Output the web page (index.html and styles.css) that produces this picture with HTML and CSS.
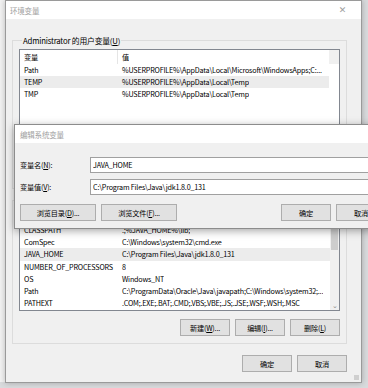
FILE: index.html
```html
<!DOCTYPE html>
<html lang="zh-CN">
<head>
  <meta charset="UTF-8" />
  <meta name="viewport" content="width=device-width, initial-scale=1.0"/>
  <title>环境变量</title>
  <link rel="stylesheet" href="styles.css">
</head>
<body>
  <div class="desk">
    <div class="side-strip"></div>

    <!-- background window: 环境变量 -->
    <div class="win env-win">
      <div class="titlebar">
        <span class="title">环境变量</span>
        <span class="close">✕</span>
      </div>
      <div class="win-body">
        <fieldset class="group">
          <legend>Administrator 的用户变量(<u>U</u>)</legend>
          <div class="list user-list">
            <div class="row head"><span class="c1">变量</span><span class="c2">值</span></div>
            <div class="row"><span class="c1">Path</span><span class="c2">%USERPROFILE%\AppData\Local\Microsoft\WindowsApps;C:...</span></div>
            <div class="row sel"><span class="c1">TEMP</span><span class="c2">%USERPROFILE%\AppData\Local\Temp</span></div>
            <div class="row"><span class="c1">TMP</span><span class="c2">%USERPROFILE%\AppData\Local\Temp</span></div>
          </div>
          <div class="btn-row">
            <button class="btn">新建(<u>N</u>)...</button>
            <button class="btn">编辑(<u>E</u>)...</button>
            <button class="btn">删除(<u>D</u>)</button>
          </div>
        </fieldset>

        <fieldset class="group sys-group">
          <legend>系统变量(<u>S</u>)</legend>
          <div class="list sys-list">
            <div class="rows">
              <div class="row head"><span class="c1">变量</span><span class="c2">值</span></div>
              <div class="row"><span class="c1">CLASSPATH</span><span class="c2">.;%JAVA_HOME%\lib;</span></div>
              <div class="row"><span class="c1">ComSpec</span><span class="c2">C:\Windows\system32\cmd.exe</span></div>
              <div class="row sel"><span class="c1">JAVA_HOME</span><span class="c2">C:\Program Files\Java\jdk1.8.0_131</span></div>
              <div class="row"><span class="c1">NUMBER_OF_PROCESSORS</span><span class="c2">8</span></div>
              <div class="row"><span class="c1">OS</span><span class="c2">Windows_NT</span></div>
              <div class="row"><span class="c1">Path</span><span class="c2">C:\ProgramData\Oracle\Java\javapath;C:\Windows\system32;...</span></div>
              <div class="row"><span class="c1">PATHEXT</span><span class="c2">.COM;.EXE;.BAT;.CMD;.VBS;.VBE;.JS;.JSE;.WSF;.WSH;.MSC</span></div>
            </div>
            <div class="vscroll">
              <div class="thumb"></div>
              <span class="arrow">⌄</span>
            </div>
          </div>
          <div class="btn-row">
            <button class="btn">新建(<u>W</u>)...</button>
            <button class="btn">编辑(<u>I</u>)...</button>
            <button class="btn">删除(<u>L</u>)</button>
          </div>
        </fieldset>

        <div class="btn-row main-btns">
          <button class="btn">确定</button>
          <button class="btn">取消</button>
        </div>
      </div>
      <span class="grip"></span>
    </div>

    <!-- foreground dialog: 编辑系统变量 -->
    <div class="win edit-win">
      <div class="titlebar">
        <span class="title">编辑系统变量</span>
      </div>
      <div class="edit-body">
        <div class="field">
          <label for="varName">变量名(<u>N</u>):</label>
          <input type="text" id="varName" value="JAVA_HOME" />
        </div>
        <div class="field">
          <label for="varValue">变量值(<u>V</u>):</label>
          <input type="text" id="varValue" value="C:\Program Files\Java\jdk1.8.0_131" />
        </div>
        <div class="edit-btns">
          <button class="btn wide">浏览目录(<u>D</u>)...</button>
          <button class="btn wide">浏览文件(<u>F</u>)...</button>
          <span class="spacer"></span>
          <button class="btn">确定</button>
          <button class="btn">取消</button>
        </div>
      </div>
    </div>
  </div>
</body>
</html>
```

FILE: styles.css
```css
body {
  margin: 0;
  padding: 0;
  font-family: 'Noto Sans CJK SC', sans-serif;
  font-size: 7.2px;
  letter-spacing: -0.2px;
  color: #000;
  background: #d9dbdd;
  overflow: hidden;
}

u {
  text-decoration: underline;
}

.desk {
  position: relative;
  width: 368px;
  height: 388px;
  overflow: hidden;
}

.side-strip {
  width: 6px;
  height: 382px;
  background: #f3f3f3;
  border-right: 1px solid #d0d0d0;
}

.win {
  position: absolute;
  background: #f0f0f0;
  border: 1px solid #9a9a9a;
  box-sizing: border-box;
}

.titlebar {
  height: 18px;
  background: #fff;
  display: flex;
  align-items: center;
  justify-content: space-between;
  padding: 0 15px 0 4px;
}

.title {
  color: #a0a0a0;
  font-size: 7.5px;
}

.close {
  color: #a0a0a0;
  font-size: 9px;
  font-family: 'DejaVu Sans', sans-serif;
}

/* 环境变量 */
.env-win {
  left: 5px;
  top: 0;
  width: 357px;
  height: 383px;
  box-shadow: 0 0 6px rgba(0, 0, 0, 0.25);
}

.win-body {
  padding: 16px 14px 0 6px;
}

.group {
  margin: 0;
  padding: 3px 6px 7px 6px;
  border: 1px solid #dcdcdc;
  min-width: 0;
}

.group legend {
  padding: 0 1px;
  margin-left: 3px;
  line-height: 11px;
  font-size: 7.8px;
}

.sys-group {
  margin-top: 6px;
}

.list {
  background: #fff;
  border: 1px solid #828790;
  box-sizing: border-box;
}

.user-list {
  height: 107px;
}

.sys-list {
  height: 102px;
  display: flex;
}

.sys-list .rows {
  flex: 1;
  min-width: 0;
}

.row {
  display: flex;
  height: 12.2px;
  line-height: 12.2px;
  white-space: nowrap;
  overflow: hidden;
  margin-right: 10px;
}

.sys-list .row {
  margin-right: 0;
}

.row .c1 {
  width: 94px;
  padding-left: 4px;
  flex-shrink: 0;
  overflow: hidden;
}

.row .c2 {
  padding-left: 4px;
  overflow: hidden;
}

.row.head {
  height: 14px;
  line-height: 14px;
  margin-right: 0;
  background: linear-gradient(to left, #f0f0f0 10px, #fff 10px);
}

.sys-list .row.head {
  background: #fff;
}

.row.head .c1 {
  border-right: 1px solid #e5e5e5;
  width: 93px;
}

.row.sel {
  background: #ececec;
}

.vscroll {
  width: 9px;
  background: #f0f0f0;
  position: relative;
}

.vscroll .thumb {
  margin: 0 1px;
  height: 40px;
  background: #cdcdcd;
}

.vscroll .arrow {
  position: absolute;
  bottom: 1px;
  left: 2px;
  font-size: 7px;
  line-height: 7px;
  color: #8a8a8a;
}

.btn-row {
  display: flex;
  justify-content: flex-end;
  gap: 5px;
  margin-top: 8px;
}

.btn {
  width: 50px;
  height: 17px;
  padding: 0;
  background: #e1e1e1;
  border: 1px solid #adadad;
  font-family: 'Noto Sans CJK SC', sans-serif;
  font-size: 7.2px;
  letter-spacing: -0.2px;
  color: #000;
}

.main-btns {
  margin-top: 11px;
}

.grip {
  position: absolute;
  right: 2px;
  bottom: 2px;
  width: 5px;
  height: 5px;
  background: radial-gradient(circle, #a8a8a8 0.6px, transparent 0.8px) 0 0 / 2px 2px;
}

/* 编辑系统变量 */
.edit-win {
  left: 14px;
  top: 124px;
  width: 384px;
  height: 105px;
  border-color: #8c8c8c;
  box-shadow: 0 2px 8px rgba(0, 0, 0, 0.35);
}

.edit-win .titlebar {
  height: 18px;
  padding-left: 5px;
}

.edit-body {
  padding: 14px 11px 0 5px;
}

.field {
  display: flex;
  align-items: center;
  margin-bottom: 6px;
}

.field label {
  width: 70px;
}

.field input {
  flex: 1;
  height: 16px;
  box-sizing: border-box;
  border: 1px solid #a0a0a0;
  background: #fff;
  padding: 0 2px;
  font-family: 'Noto Sans CJK SC', sans-serif;
  font-size: 7.2px;
  letter-spacing: -0.2px;
  color: #000;
  outline: none;
}

.edit-btns {
  display: flex;
  gap: 5px;
  margin-top: 9px;
}

.btn.wide {
  width: 76px;
}

.spacer {
  flex: 1;
}
```
